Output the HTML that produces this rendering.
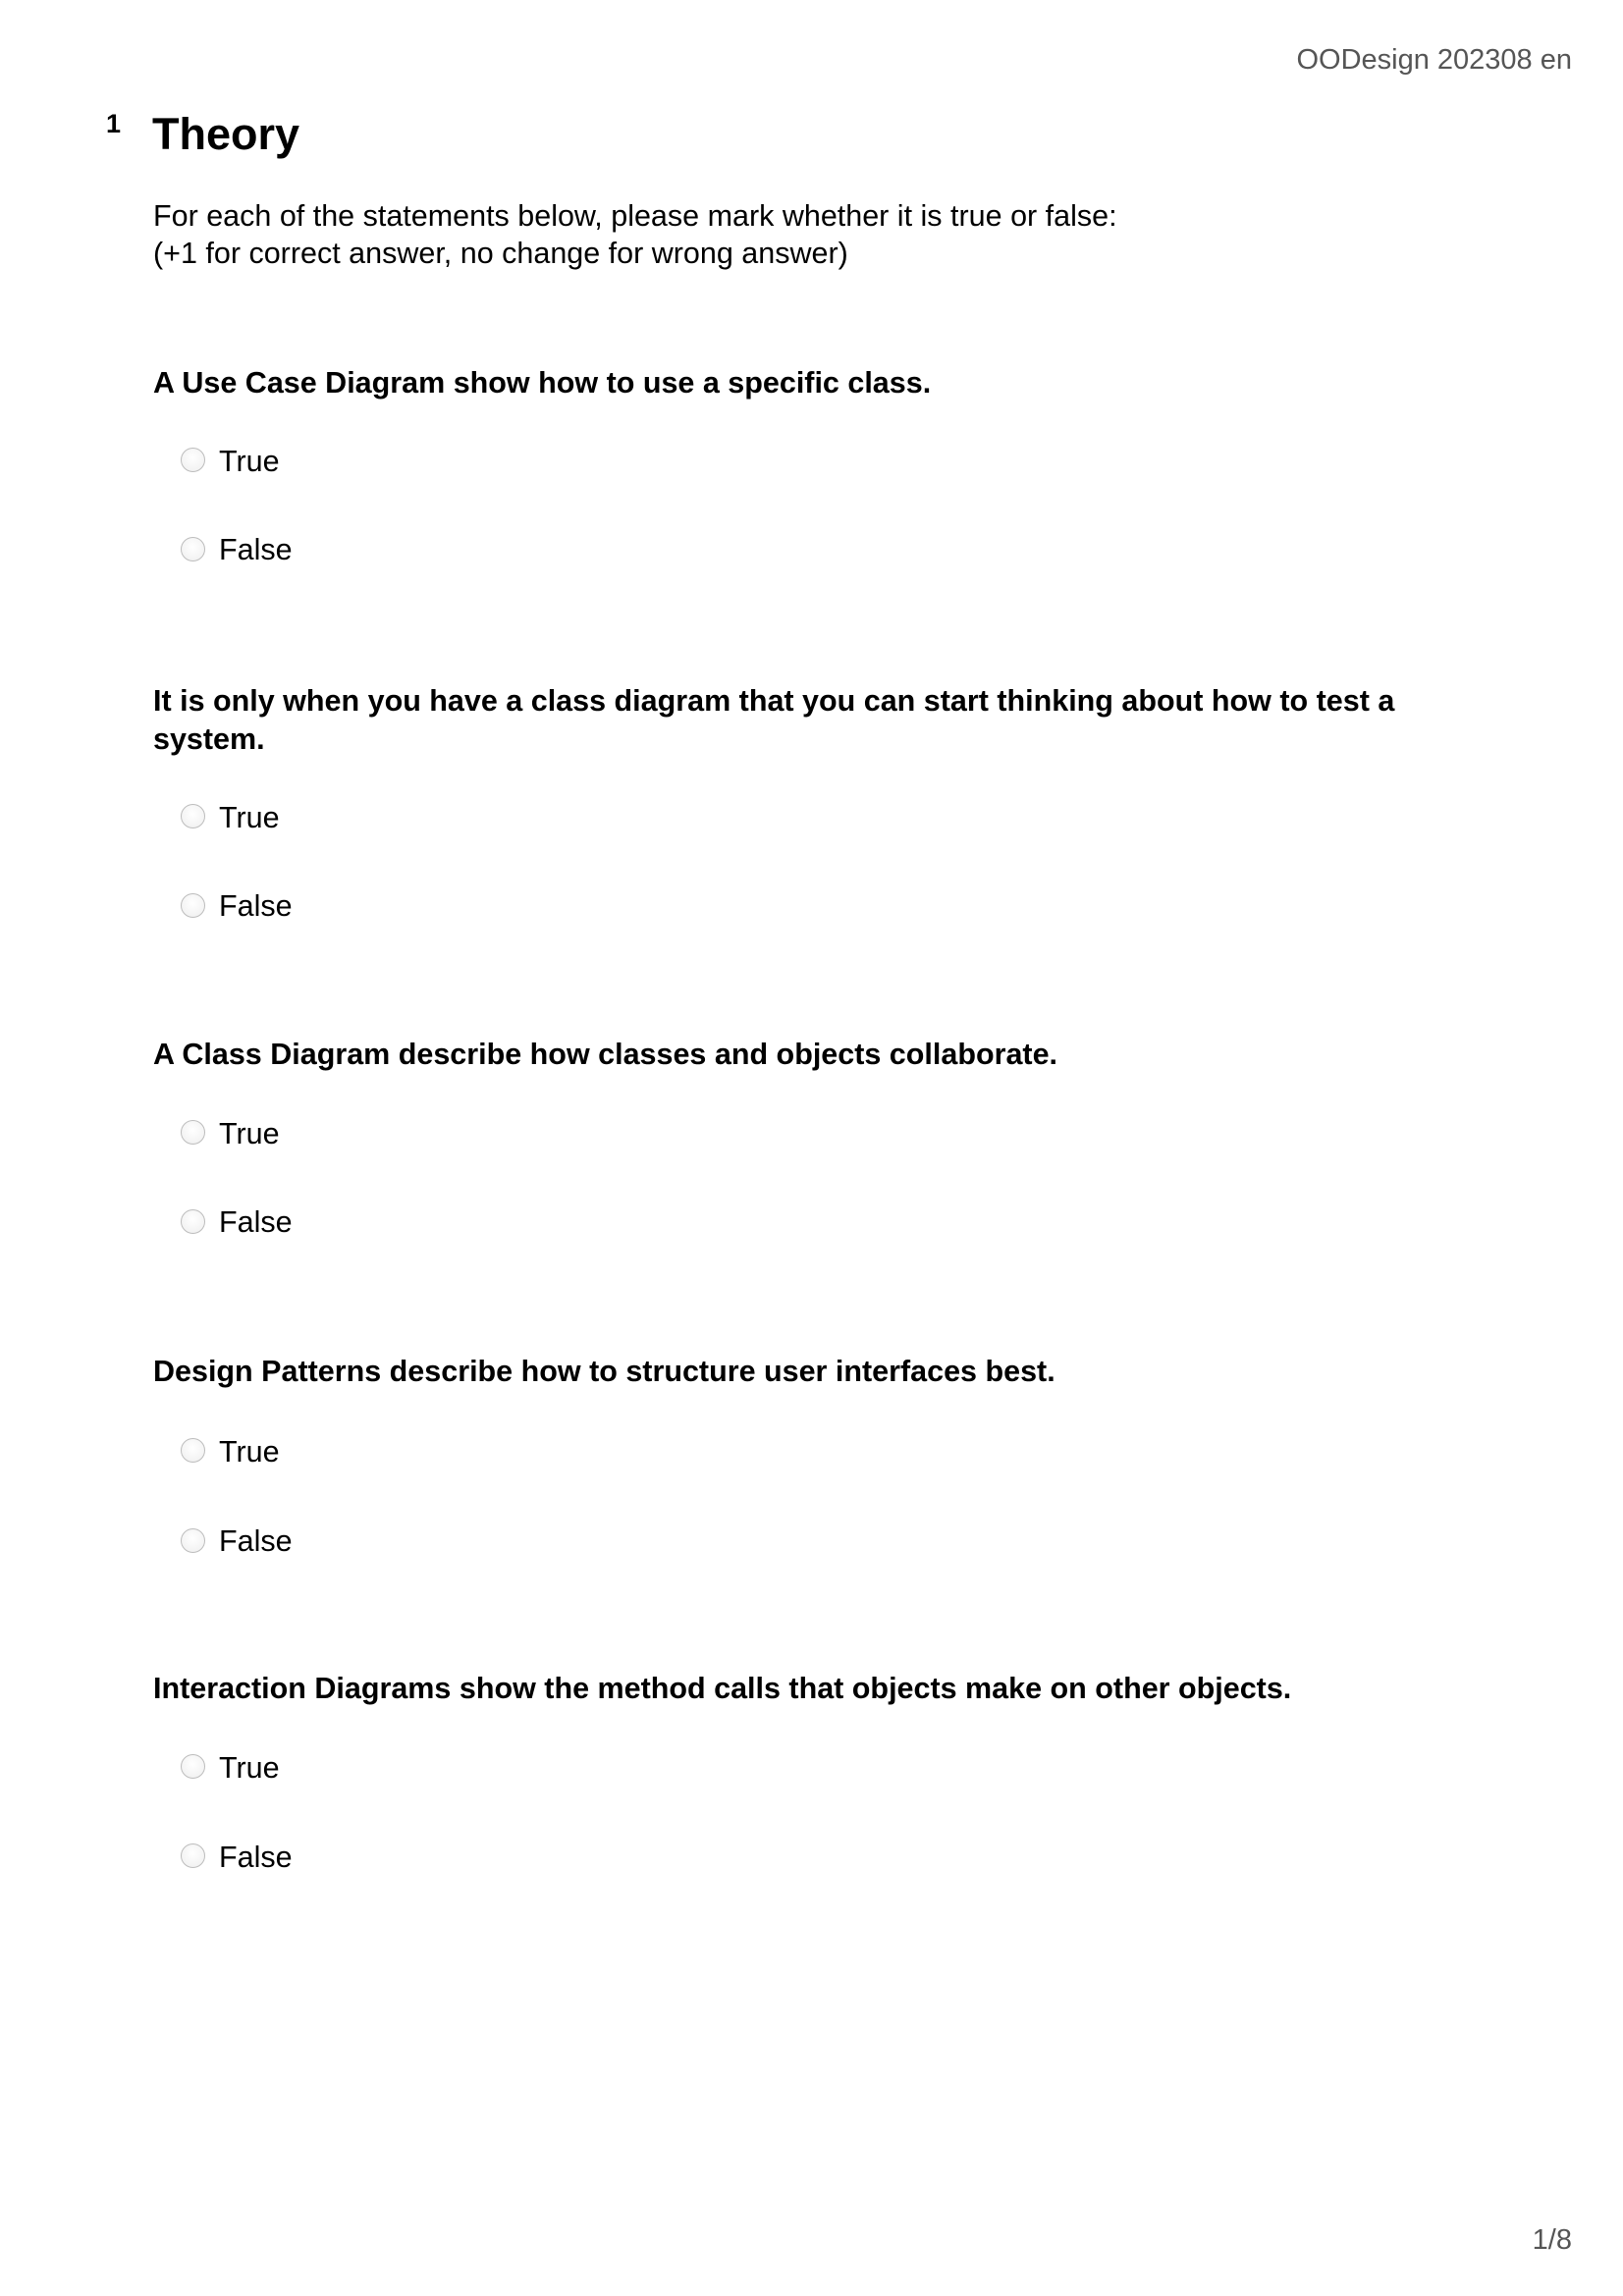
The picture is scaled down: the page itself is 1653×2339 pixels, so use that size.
<!DOCTYPE html>
<html><head><meta charset="utf-8"><style>
body{margin:0;width:1653px;height:2339px;background:#fff;position:relative;font-family:"Liberation Sans",Arial,sans-serif;color:#000}
.t{position:absolute;white-space:nowrap;line-height:1}
.n{font-size:30.5px}
.b{font-size:30.5px;font-weight:bold}
.r{position:absolute;left:184px;width:23px;height:23px;border:1px solid #bdbdbd;border-radius:50%;background:radial-gradient(circle at 50% 40%,#fff,#eeeeee)}
</style></head><body>
<div class="t" style="right:52px;top:47px;font-size:29px;color:#555">OODesign 202308 en</div>
<div class="t" style="left:108px;top:113px;font-size:27px;font-weight:bold">1</div>
<div class="t" style="left:155px;top:114px;font-size:45px;font-weight:bold">Theory</div>
<div class="t n" style="left:156px;top:205px">For each of the statements below, please mark whether it is true or false:</div>
<div class="t n" style="left:156px;top:243px">(+1 for correct answer, no change for wrong answer)</div>

<div class="t b" style="left:156px;top:375px">A Use Case Diagram show how to use a specific class.</div>
<div class="r" style="top:456px"></div><div class="t n" style="left:223px;top:455px">True</div>
<div class="r" style="top:547px"></div><div class="t n" style="left:223px;top:545px">False</div>

<div class="t b" style="left:156px;top:699px">It is only when you have a class diagram that you can start thinking about how to test a</div>
<div class="t b" style="left:156px;top:738px">system.</div>
<div class="r" style="top:819px"></div><div class="t n" style="left:223px;top:818px">True</div>
<div class="r" style="top:910px"></div><div class="t n" style="left:223px;top:908px">False</div>

<div class="t b" style="left:156px;top:1059px">A Class Diagram describe how classes and objects collaborate.</div>
<div class="r" style="top:1141px"></div><div class="t n" style="left:223px;top:1140px">True</div>
<div class="r" style="top:1232px"></div><div class="t n" style="left:223px;top:1230px">False</div>

<div class="t b" style="left:156px;top:1382px">Design Patterns describe how to structure user interfaces best.</div>
<div class="r" style="top:1465px"></div><div class="t n" style="left:223px;top:1464px">True</div>
<div class="r" style="top:1557px"></div><div class="t n" style="left:223px;top:1555px">False</div>

<div class="t b" style="left:156px;top:1705px">Interaction Diagrams show the method calls that objects make on other objects.</div>
<div class="r" style="top:1787px"></div><div class="t n" style="left:223px;top:1786px">True</div>
<div class="r" style="top:1878px"></div><div class="t n" style="left:223px;top:1877px">False</div>

<div class="t" style="right:52px;top:2268px;font-size:29px;color:#555">1/8</div>
</body></html>
